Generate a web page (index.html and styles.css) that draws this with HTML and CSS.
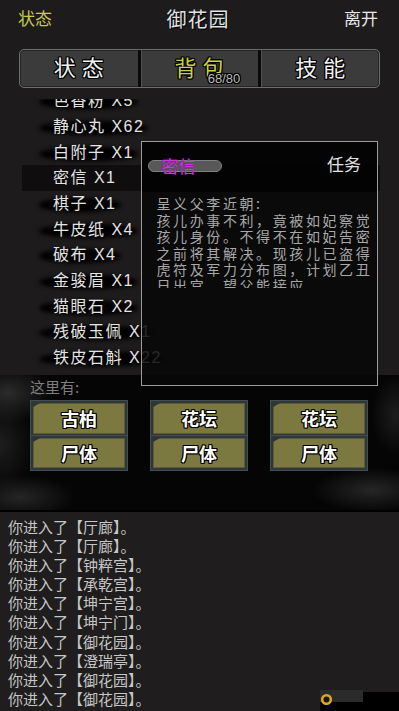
FILE: index.html
```html
<!DOCTYPE html>
<html lang="zh">
<head>
<meta charset="utf-8">
<title>御花园</title>
<link rel="stylesheet" href="styles.css">
</head>
<body>
<div class="app">
  <header class="topbar">
    <span class="status">状态</span>
    <h1 class="title">御花园</h1>
    <span class="leave">离开</span>
  </header>

  <nav class="tabs">
    <div class="tab">状态</div>
    <div class="tab active">背包<span class="count">68/80</span></div>
    <div class="tab">技能</div>
  </nav>

  <section class="bag">
    <div class="items">
      <ul class="scroll">
        <li><span class="name">色香粉 X5</span></li>
        <li><span class="name">静心丸 X62</span></li>
        <li><span class="name">白附子 X1</span></li>
        <li class="sel"><span class="name">密信 X1</span></li>
        <li><span class="name">棋子 X1</span></li>
        <li><span class="name">牛皮纸 X4</span></li>
        <li><span class="name">破布 X4</span></li>
        <li><span class="name">金骏眉 X1</span></li>
        <li><span class="name">猫眼石 X2</span></li>
        <li><span class="name">残破玉佩 X1</span></li>
        <li><span class="name">铁皮石斛 X22</span></li>
      </ul>
    </div>

    <div class="letter">
      <div class="letter-head">
        <span class="pill"><span class="pill-text">密信</span></span>
        <span class="task">任务</span>
      </div>
      <div class="letter-body">
        <p class="letter-text">呈义父李近朝:<br>孩儿办事不利，竟被如妃察觉孩儿身份。不得不在如妃告密之前将其解决。现孩儿已盗得虎符及军力分布图，计划乙丑日出宫，望父能接应。</p>
      </div>
    </div>
  </section>

  <section class="scene">
    <p class="here">这里有:</p>
    <div class="grid">
      <div class="btn">古柏</div>
      <div class="btn">花坛</div>
      <div class="btn">花坛</div>
      <div class="btn">尸体</div>
      <div class="btn">尸体</div>
      <div class="btn">尸体</div>
    </div>
  </section>

  <section class="log">
    <p>你进入了【厅廊】。</p>
    <p>你进入了【厅廊】。</p>
    <p>你进入了【钟粹宫】。</p>
    <p>你进入了【承乾宫】。</p>
    <p>你进入了【坤宁宫】。</p>
    <p>你进入了【坤宁门】。</p>
    <p>你进入了【御花园】。</p>
    <p>你进入了【澄瑞亭】。</p>
    <p>你进入了【御花园】。</p>
    <p>你进入了【御花园】。</p>
  </section>

  <div class="dock">
    <span class="dock-bar"></span>
    <svg class="dock-ring" width="13" height="13" viewBox="0 0 13 13"><circle cx="6.5" cy="7.5" r="4.3" fill="#1a1408" stroke="#d8a820" stroke-width="2.6"/></svg>
  </div>
</div>
</body>
</html>
```

FILE: styles.css
```css
* {
  box-sizing: border-box;
  margin: 0;
  padding: 0;
}

html, body {
  width: 399px;
  height: 711px;
  overflow: hidden;
  background: #1d1b1b;
}

body {
  font-family: "Liberation Sans", "Noto Sans CJK SC", sans-serif;
  color: #dddddd;
}

.app {
  position: relative;
  width: 399px;
  height: 711px;
  display: flex;
  flex-direction: column;
}

/* top bar */
.topbar {
  height: 40px;
  flex: none;
  display: flex;
  align-items: center;
  justify-content: space-between;
  padding: 0 21px 0 18px;
}

.status {
  font-size: 17px;
  line-height: 20px;
  color: #c8ca4c;
}

.title {
  font-size: 20px;
  line-height: 24px;
  font-weight: normal;
  letter-spacing: 1px;
  color: #e2e2e2;
  text-shadow: 0 0 1px #000, 1px 1px 0 #000;
}

.leave {
  font-size: 17px;
  line-height: 20px;
  color: #e8e8e8;
}

/* tabs */
.tabs {
  flex: none;
  margin: 9px 19px 0 19px;
  height: 39px;
  border: 1px solid #6c6c6c;
  border-radius: 5px;
  background: #3b3b3b;
  box-shadow: inset 0 0 0 1px #262626;
  display: flex;
}

.tab {
  flex: 1;
  position: relative;
  display: flex;
  align-items: center;
  justify-content: center;
  padding-left: 6px;
  font-size: 22px;
  line-height: 26px;
  letter-spacing: 6px;
  color: #f2f2f2;
  text-shadow: -1px -1px 0 #000, 1px -1px 0 #000, -1px 1px 0 #000, 1px 1px 0 #000,
               0 1px 0 #000, 1px 0 0 #000, -1px 0 0 #000, 0 -1px 0 #000;
}

.tab + .tab {
  border-left: 3px solid #0a0a0a;
  box-shadow: inset 1px 0 0 #505050;
}

.tab.active {
  color: #c9d146;
}

.count {
  position: absolute;
  left: 67px;
  top: 22px;
  font-size: 13px;
  line-height: 14px;
  letter-spacing: 0;
  color: #bdbdbd;
}

/* bag list */
.bag {
  position: relative;
  flex: none;
  height: 287px;
}

.items {
  margin-top: 11px;
  height: 276px;
  overflow: hidden;
}

.scroll {
  list-style: none;
  margin-top: -10.5px;
}

.scroll li {
  height: 25.67px;
  display: flex;
  align-items: center;
  padding-left: 53px;
  font-size: 16px;
  letter-spacing: 1.5px;
  color: #e4e4e4;
}

.name {
  position: relative;
  z-index: 0;
  line-height: 20px;
}

.name::before {
  content: "";
  position: absolute;
  left: -14px;
  right: -4px;
  top: 50%;
  height: 14px;
  margin-top: -6px;
  background: #000;
  border-radius: 50%;
  filter: blur(2px);
  z-index: -1;
}

.scroll li.sel {
  margin-left: 22px;
  padding-left: 31px;
  margin-right: 19px;
  background: #0f0d0d;
}

.scroll li.sel .name::before {
  display: none;
}

/* letter popup */
.letter {
  position: absolute;
  left: 141px;
  top: 53px;
  width: 237px;
  height: 245px;
  border: 1.5px solid #9c9c9c;
  background: rgba(8, 8, 8, 0.86);
  display: flex;
  flex-direction: column;
}

.letter-head {
  flex: none;
  height: 50px;
  background: rgba(0, 0, 0, 0.55);
  display: flex;
  align-items: center;
  justify-content: space-between;
  padding: 0 16px 3px 5.5px;
}

.pill {
  position: relative;
  width: 74px;
  height: 12px;
  border-radius: 6px;
  background: #585858;
  border: 1px solid #808080;
  display: flex;
  align-items: center;
}

.pill-text {
  padding-left: 13px;
  font-family: "Noto Sans CJK SC", sans-serif;
  font-size: 17px;
  line-height: 12px;
  color: #cc36de;
  text-shadow: 0 0 1px #5a0068;
}

.task {
  font-size: 17px;
  line-height: 20px;
  color: #e0e0e0;
}

.letter-body {
  padding: 3.3px 0 0 14.5px;
}

.letter-text {
  width: 221px;
  max-height: 93px;
  overflow: hidden;
  font-family: "Noto Sans CJK SC", sans-serif;
  font-size: 14px;
  line-height: 16.4px;
  letter-spacing: 2.6px;
  color: #a8a8a8;
}

/* scene */
.scene {
  flex: none;
  height: 135px;
  padding-top: 3px;
  background:
    radial-gradient(ellipse 45px 30px at 8px 18px, rgba(75, 75, 75, 0.55), transparent),
    radial-gradient(ellipse 35px 45px at 0px 70px, rgba(60, 60, 60, 0.45), transparent),
    radial-gradient(ellipse 55px 22px at 20px 122px, rgba(70, 70, 70, 0.5), transparent),
    radial-gradient(ellipse 60px 22px at 372px 115px, rgba(65, 65, 65, 0.55), transparent),
    radial-gradient(ellipse 25px 40px at 396px 40px, rgba(60, 60, 60, 0.45), transparent),
    #050505;
}

.here {
  padding-left: 30px;
  font-family: "Noto Sans CJK SC", sans-serif;
  font-size: 15px;
  line-height: 18px;
  color: #7e7e7e;
}

.grid {
  display: grid;
  grid-template-columns: repeat(3, 96px);
  column-gap: 24px;
  margin: 5px 0 0 31px;
}

.btn {
  position: relative;
  height: 34.5px;
  background: #7b793f;
  border: 2px solid #30373b;
  box-shadow: inset 0 0 0 1px #5a5a3a, 0 0 0 1px #454c50;
  display: flex;
  align-items: center;
  justify-content: center;
  font-family: "Noto Sans CJK SC", sans-serif;
  font-size: 18px;
  font-weight: bold;
  color: #ffffff;
  text-shadow: -1px -1px 0 #000, 1px -1px 0 #000, -1px 1px 0 #000, 1px 1px 0 #000,
               0 1px 0 #000, 1px 0 0 #000, -1px 0 0 #000, 0 -1px 0 #000;
}

.btn::before {
  content: "";
  position: absolute;
  left: 0;
  top: 0;
  border-top: 4px solid #2e3234;
  border-right: 7px solid transparent;
}

/* log */
.log {
  flex: 1;
  background: #1f1d1d;
  border-top: 2px solid #000;
  padding: 5px 0 0 8px;
  font-family: "Noto Sans CJK SC", sans-serif;
  font-size: 15px;
  line-height: 19.1px;
  color: #c6c6c6;
}

/* dock widget */
.dock {
  position: absolute;
  left: 320px;
  top: 692px;
  width: 79px;
  height: 19px;
  background: #000;
}

.dock-bar {
  position: absolute;
  left: 0;
  top: -2px;
  width: 43px;
  height: 12px;
  background: #2b2b2b;
}

.dock-ring {
  position: absolute;
  left: 0;
  top: 0;
}
```
